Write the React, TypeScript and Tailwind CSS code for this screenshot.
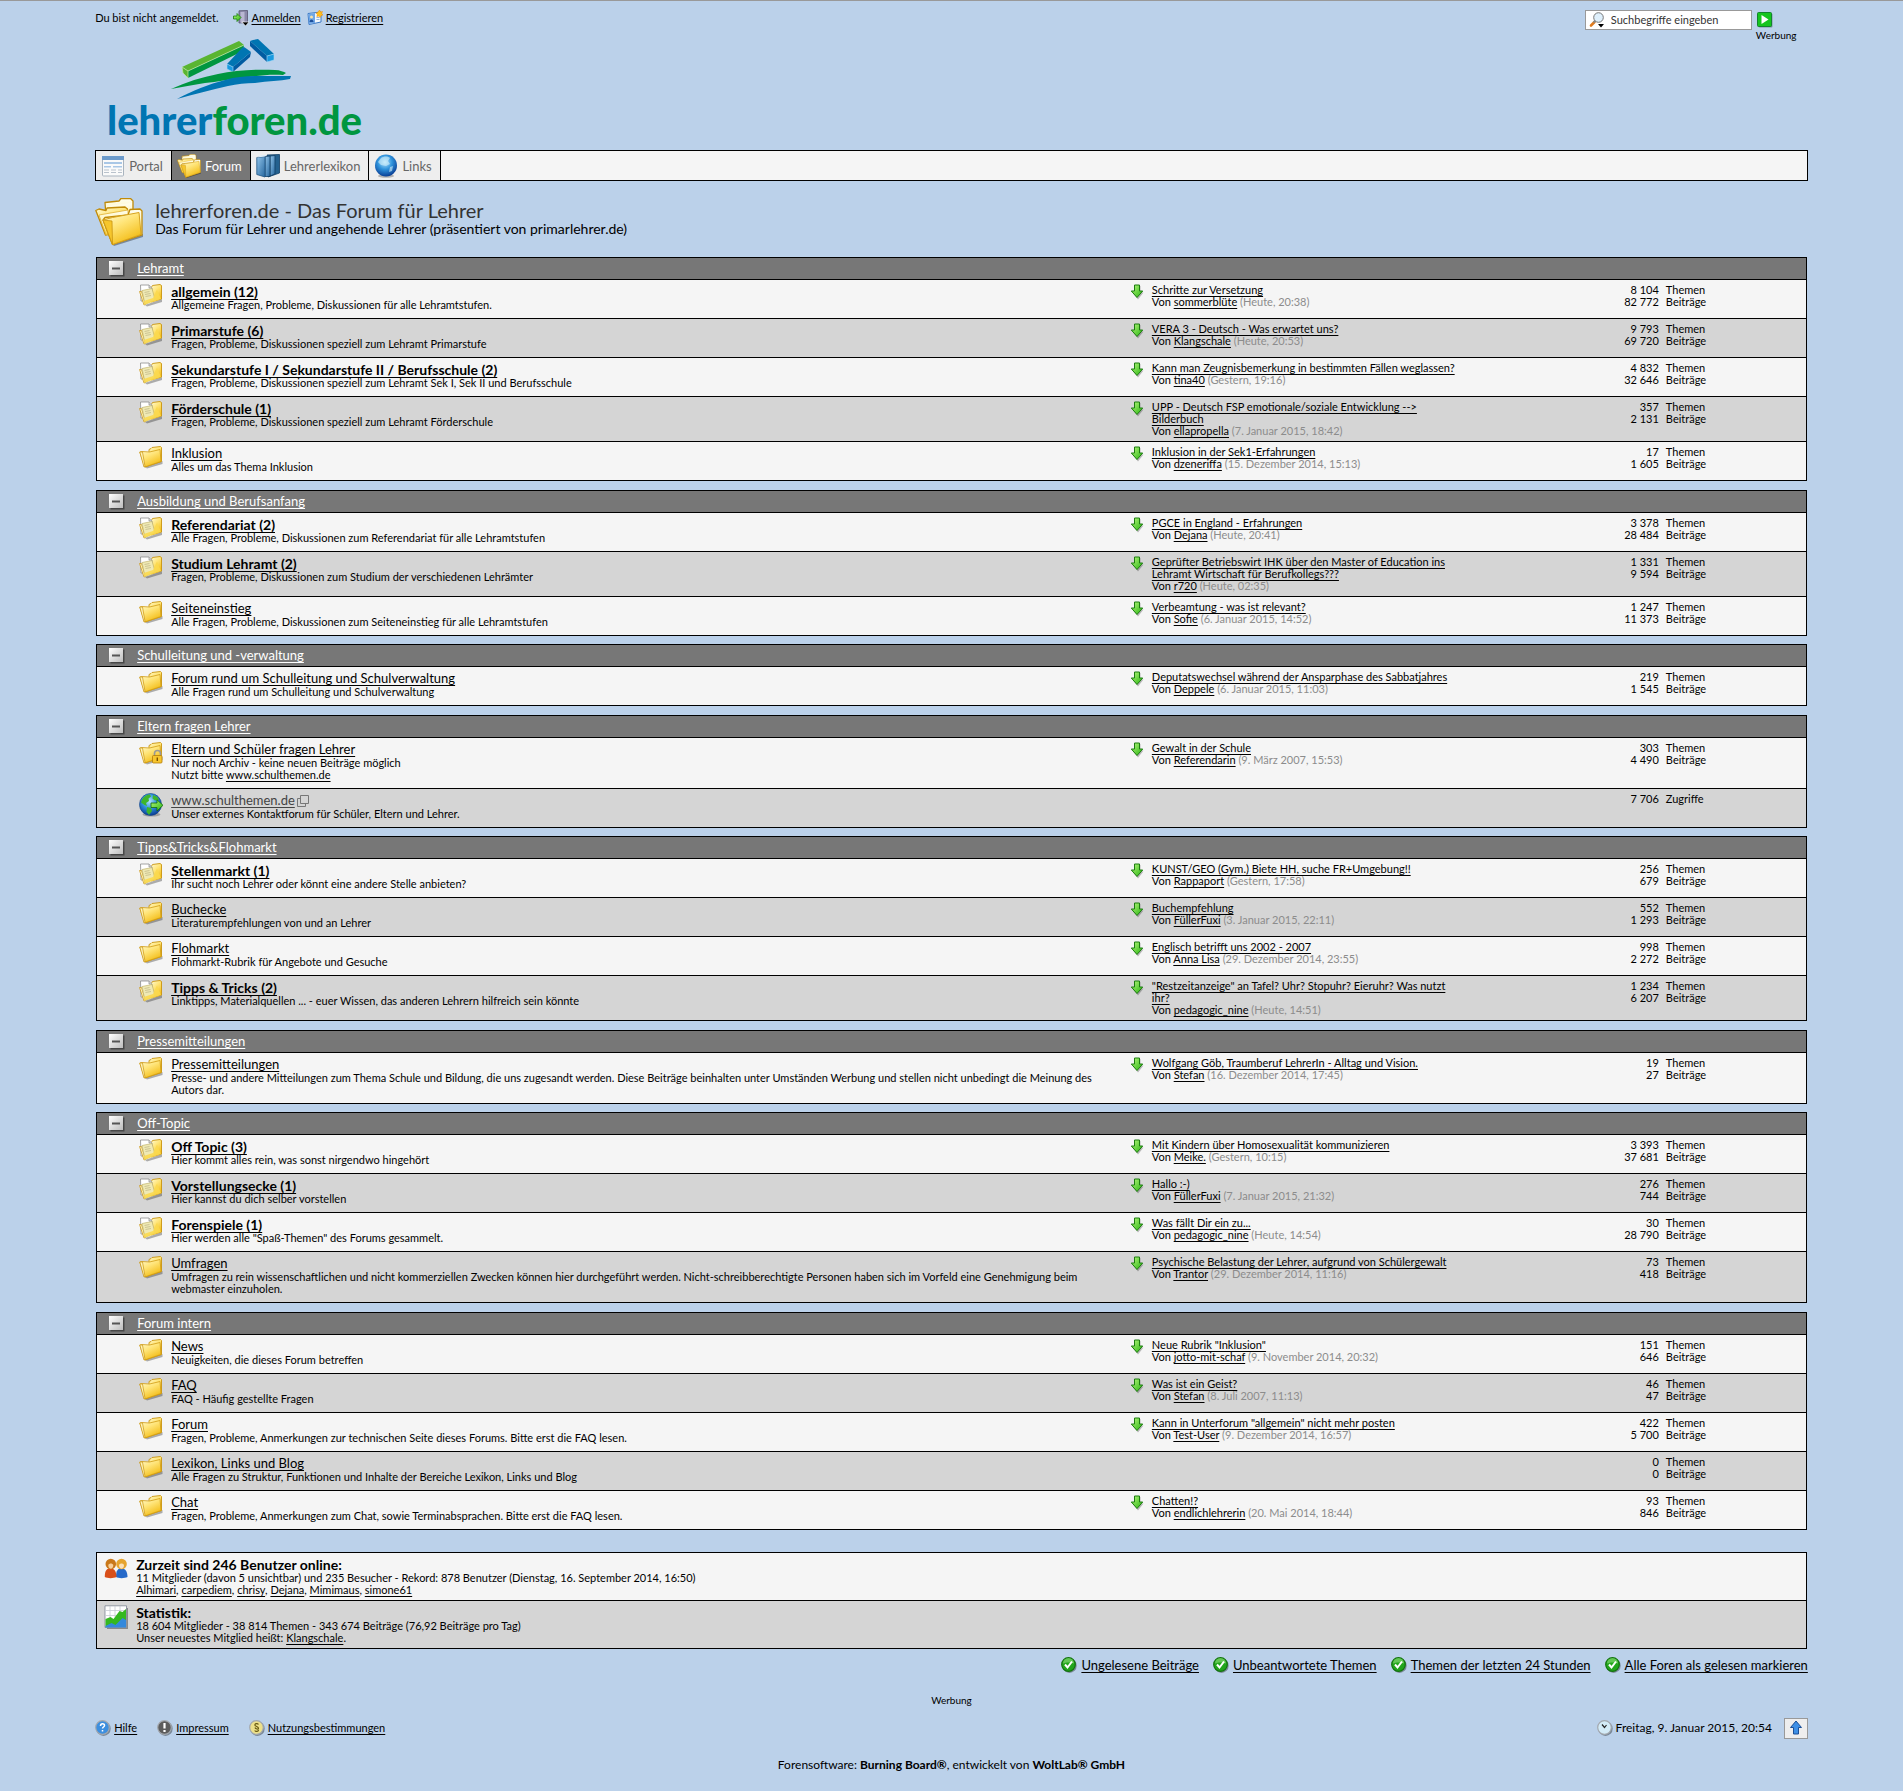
import type { ReactNode } from "react"

type Icon = "unread" | "read" | "locked" | "link"

interface Board {
  icon: Icon
  title: string
  text: ReactNode
  post?: [string, string, string]
  topics?: string
  posts?: string
  clicks?: string
}

const link =
  "underline underline-offset-2 [text-decoration-skip-ink:none] hover:text-[#444]"

const categories: { name: string; boards: Board[] }[] = [
  {
    name: "Lehramt",
    boards: [
      { icon: "unread", title: "allgemein (12)", text: "Allgemeine Fragen, Probleme, Diskussionen für alle Lehramtstufen.", post: ["Schritte zur Versetzung", "sommerblüte", "Heute, 20:38"], topics: "8 104", posts: "82 772" },
      { icon: "unread", title: "Primarstufe (6)", text: "Fragen, Probleme, Diskussionen speziell zum Lehramt Primarstufe", post: ["VERA 3 - Deutsch - Was erwartet uns?", "Klangschale", "Heute, 20:53"], topics: "9 793", posts: "69 720" },
      { icon: "unread", title: "Sekundarstufe I / Sekundarstufe II / Berufsschule (2)", text: "Fragen, Probleme, Diskussionen speziell zum Lehramt Sek I, Sek II und Berufsschule", post: ["Kann man Zeugnisbemerkung in bestimmten Fällen weglassen?", "tina40", "Gestern, 19:16"], topics: "4 832", posts: "32 646" },
      { icon: "unread", title: "Förderschule (1)", text: "Fragen, Probleme, Diskussionen speziell zum Lehramt Förderschule", post: ["UPP - Deutsch FSP emotionale/soziale Entwicklung --> Bilderbuch", "ellapropella", "7. Januar 2015, 18:42"], topics: "357", posts: "2 131" },
      { icon: "read", title: "Inklusion", text: "Alles um das Thema Inklusion", post: ["Inklusion in der Sek1-Erfahrungen", "dzeneriffa", "15. Dezember 2014, 15:13"], topics: "17", posts: "1 605" },
    ],
  },
  {
    name: "Ausbildung und Berufsanfang",
    boards: [
      { icon: "unread", title: "Referendariat (2)", text: "Alle Fragen, Probleme, Diskussionen zum Referendariat für alle Lehramtstufen", post: ["PGCE in England - Erfahrungen", "Dejana", "Heute, 20:41"], topics: "3 378", posts: "28 484" },
      { icon: "unread", title: "Studium Lehramt (2)", text: "Fragen, Probleme, Diskussionen zum Studium der verschiedenen Lehrämter", post: ["Geprüfter Betriebswirt IHK über den Master of Education ins Lehramt Wirtschaft für Berufkollegs???", "r720", "Heute, 02:35"], topics: "1 331", posts: "9 594" },
      { icon: "read", title: "Seiteneinstieg", text: "Alle Fragen, Probleme, Diskussionen zum Seiteneinstieg für alle Lehramtstufen", post: ["Verbeamtung - was ist relevant?", "Sofie", "6. Januar 2015, 14:52"], topics: "1 247", posts: "11 373" },
    ],
  },
  {
    name: "Schulleitung und -verwaltung",
    boards: [
      { icon: "read", title: "Forum rund um Schulleitung und Schulverwaltung", text: "Alle Fragen rund um Schulleitung und Schulverwaltung", post: ["Deputatswechsel während der Ansparphase des Sabbatjahres", "Deppele", "6. Januar 2015, 11:03"], topics: "219", posts: "1 545" },
    ],
  },
  {
    name: "Eltern fragen Lehrer",
    boards: [
      {
        icon: "locked",
        title: "Eltern und Schüler fragen Lehrer",
        text: (
          <>
            Nur noch Archiv - keine neuen Beiträge möglich
            <br />
            Nutzt bitte <a href="#schulthemen" className={link}>www.schulthemen.de</a>
          </>
        ),
        post: ["Gewalt in der Schule", "Referendarin", "9. März 2007, 15:53"],
        topics: "303",
        posts: "4 490",
      },
      { icon: "link", title: "www.schulthemen.de", text: "Unser externes Kontaktforum für Schüler, Eltern und Lehrer.", clicks: "7 706" },
    ],
  },
  {
    name: "Tipps&Tricks&Flohmarkt",
    boards: [
      { icon: "unread", title: "Stellenmarkt (1)", text: "Ihr sucht noch Lehrer oder könnt eine andere Stelle anbieten?", post: ["KUNST/GEO (Gym.) Biete HH, suche FR+Umgebung!!", "Rappaport", "Gestern, 17:58"], topics: "256", posts: "679" },
      { icon: "read", title: "Buchecke", text: "Literaturempfehlungen von und an Lehrer", post: ["Buchempfehlung", "FüllerFuxi", "3. Januar 2015, 22:11"], topics: "552", posts: "1 293" },
      { icon: "read", title: "Flohmarkt", text: "Flohmarkt-Rubrik für Angebote und Gesuche", post: ["Englisch betrifft uns 2002 - 2007", "Anna Lisa", "29. Dezember 2014, 23:55"], topics: "998", posts: "2 272" },
      { icon: "unread", title: "Tipps & Tricks (2)", text: "Linktipps, Materialquellen ... - euer Wissen, das anderen Lehrern hilfreich sein könnte", post: ["\"Restzeitanzeige\" an Tafel? Uhr? Stopuhr? Eieruhr? Was nutzt ihr?", "pedagogic_nine", "Heute, 14:51"], topics: "1 234", posts: "6 207" },
    ],
  },
  {
    name: "Pressemitteilungen",
    boards: [
      { icon: "read", title: "Pressemitteilungen", text: "Presse- und andere Mitteilungen zum Thema Schule und Bildung, die uns zugesandt werden. Diese Beiträge beinhalten unter Umständen Werbung und stellen nicht unbedingt die Meinung des Autors dar.", post: ["Wolfgang Göb, Traumberuf LehrerIn - Alltag und Vision.", "Stefan", "16. Dezember 2014, 17:45"], topics: "19", posts: "27" },
    ],
  },
  {
    name: "Off-Topic",
    boards: [
      { icon: "unread", title: "Off Topic (3)", text: "Hier kommt alles rein, was sonst nirgendwo hingehört", post: ["Mit Kindern über Homosexualität kommunizieren", "Meike.", "Gestern, 10:15"], topics: "3 393", posts: "37 681" },
      { icon: "unread", title: "Vorstellungsecke (1)", text: "Hier kannst du dich selber vorstellen", post: ["Hallo :-)", "FüllerFuxi", "7. Januar 2015, 21:32"], topics: "276", posts: "744" },
      { icon: "unread", title: "Forenspiele (1)", text: "Hier werden alle \"Spaß-Themen\" des Forums gesammelt.", post: ["Was fällt Dir ein zu...", "pedagogic_nine", "Heute, 14:54"], topics: "30", posts: "28 790" },
      { icon: "read", title: "Umfragen", text: "Umfragen zu rein wissenschaftlichen und nicht kommerziellen Zwecken können hier durchgeführt werden. Nicht-schreibberechtigte Personen haben sich im Vorfeld eine Genehmigung beim webmaster einzuholen.", post: ["Psychische Belastung der Lehrer, aufgrund von Schülergewalt", "Trantor", "29. Dezember 2014, 11:16"], topics: "73", posts: "418" },
    ],
  },
  {
    name: "Forum intern",
    boards: [
      { icon: "read", title: "News", text: "Neuigkeiten, die dieses Forum betreffen", post: ["Neue Rubrik \"Inklusion\"", "jotto-mit-schaf", "9. November 2014, 20:32"], topics: "151", posts: "646" },
      { icon: "read", title: "FAQ", text: "FAQ - Häufig gestellte Fragen", post: ["Was ist ein Geist?", "Stefan", "8. Juli 2007, 11:13"], topics: "46", posts: "47" },
      { icon: "read", title: "Forum", text: "Fragen, Probleme, Anmerkungen zur technischen Seite dieses Forums. Bitte erst die FAQ lesen.", post: ["Kann in Unterforum \"allgemein\" nicht mehr posten", "Test-User", "9. Dezember 2014, 16:57"], topics: "422", posts: "5 700" },
      { icon: "read", title: "Lexikon, Links und Blog", text: "Alle Fragen zu Struktur, Funktionen und Inhalte der Bereiche Lexikon, Links und Blog", topics: "0", posts: "0" },
      { icon: "read", title: "Chat", text: "Fragen, Probleme, Anmerkungen zum Chat, sowie Terminabsprachen. Bitte erst die FAQ lesen.", post: ["Chatten!?", "endlichlehrerin", "20. Mai 2014, 18:44"], topics: "93", posts: "846" },
    ],
  },
]

const members = ["Alhimari", "carpediem", "chrisy", "Dejana", "Mimimaus", "simone61"]

const quickLinks = [
  "Ungelesene Beiträge",
  "Unbeantwortete Themen",
  "Themen der letzten 24 Stunden",
  "Alle Foren als gelesen markieren",
]

/* gradients shared by all icons */
function Gradients() {
  return (
    <svg width="0" height="0" className="absolute" aria-hidden="true">
      <defs>
        <linearGradient id="yellow" x1="0" y1="0" x2="0.6" y2="1">
          <stop offset="0" stopColor="#fffbd6" />
          <stop offset="0.45" stopColor="#ffe57a" />
          <stop offset="1" stopColor="#f3bc14" />
        </linearGradient>
        <linearGradient id="cream" x1="0" y1="0" x2="0" y2="1">
          <stop offset="0" stopColor="#fffef0" />
          <stop offset="0.6" stopColor="#fdf0a4" />
          <stop offset="1" stopColor="#f7cf3c" />
        </linearGradient>
        <linearGradient id="green" x1="0" y1="0" x2="1" y2="1">
          <stop offset="0" stopColor="#b5f77c" />
          <stop offset="1" stopColor="#27b50f" />
        </linearGradient>
        <radialGradient id="globe" cx="0.45" cy="0.35" r="0.65">
          <stop offset="0" stopColor="#b4e4fb" />
          <stop offset="0.5" stopColor="#2f93dc" />
          <stop offset="1" stopColor="#0a3e94" />
        </radialGradient>
        <linearGradient id="blue" x1="0" y1="0" x2="1" y2="1">
          <stop offset="0" stopColor="#93c5ea" />
          <stop offset="1" stopColor="#26679f" />
        </linearGradient>
        <linearGradient id="grey" x1="0" y1="0" x2="1" y2="1">
          <stop offset="0" stopColor="#fff" />
          <stop offset="1" stopColor="#bdbdbd" />
        </linearGradient>
      </defs>
    </svg>
  )
}

function FolderShape() {
  return (
    <>
      <path d="M6 21 23.500 15v3L8 22.500z" fill="#000" opacity=".3" />
      <path d="M10 5.500V3.500L12 2.500 13 1.500 21.500.5 22.500 1.500V15.500L6 21z" fill="url(#yellow)" stroke="#c9940f" strokeWidth=".9" strokeLinejoin="round" />
      <path d="M.8 6 3 5.500l7.500.5L21 3.500 22 15.500 5.500 21z" fill="url(#yellow)" stroke="#d19c14" strokeWidth=".8" strokeLinejoin="round" />
      <path d="M.8 6 3.500 6 6 20.500l-1 .5z" fill="#fff3b8" stroke="#c9940f" strokeWidth=".7" strokeLinejoin="round" />
    </>
  )
}

function BoardIcon({ icon }: { icon: Icon }) {
  return (
    <svg viewBox="0 0 24 24" className="size-6 shrink-0" aria-hidden="true">
      {icon === "read" && <FolderShape />}
      {icon === "locked" && (
        <>
          <FolderShape />
          <path d="M15.500 14v-2.500a3 3 0 0 1 6 0V14" fill="none" stroke="#999" strokeWidth="1.600" />
          <rect x="13.500" y="13.500" width="9.500" height="7.500" rx="1" fill="#f7c52d" stroke="#b37b07" strokeWidth=".8" />
          <rect x="17.600" y="15.500" width="1.400" height="3.500" fill="#7a5200" />
        </>
      )}
      {icon === "unread" && (
        <>
          <path d="M6 21 23 15v3L8 22.500z" fill="#000" opacity=".3" />
          <path d="M12 4 13.500 1.500 21 .5l1.500 1V15L12 18z" fill="url(#yellow)" stroke="#c9940f" strokeWidth=".9" />
          <path d="M1.500 1h8.500l3 3v13H2z" fill="#fff" stroke="#8d8d8d" strokeWidth=".8" />
          <path d="M10 1v3h3" fill="#ddd" stroke="#8d8d8d" strokeWidth=".7" />
          <path d="M.5 7.500 2.500 7.500 6.500 20.500l-1.500.5z" fill="#fff3b8" stroke="#c9940f" strokeWidth=".7" />
          <path d="M3 6.500 13 4.500l3 11L6 20.500z" fill="#efe9b4" stroke="#b7a95c" strokeWidth=".6" />
          <path d="M4.800 17 14 14 18 5.500 22 15 5.500 20.800z" fill="#fbd94f" opacity=".9" />
          <path d="m5.500 8.500 5-1M6 10.500l5.500-1M6.500 12.500l5.500-1" stroke="#c2ba8a" strokeWidth=".8" />
        </>
      )}
      {icon === "link" && (
        <>
          <ellipse cx="12.500" cy="21.500" rx="9" ry="2" fill="#000" opacity=".25" />
          <circle cx="11.500" cy="11.500" r="11" fill="url(#globe)" stroke="#0d3f86" strokeWidth=".6" />
          <path d="M3 6.500C5 3 8 1.500 11 1.500l1 2-2.500 2 .5 2.500-3 2 1 3-2.500-1L2 9.500zM14 2l4.500 2 1.500 3-4 .5-2.500-2zM8 14l4 1 1 3-3 4-2.500-3z" fill="#3eb52b" />
          <path d="M12 10h6V6.800l6 5.500-6 5.700V14.500h-6z" fill="url(#green)" stroke="#136b08" strokeWidth=".8" />
        </>
      )}
    </svg>
  )
}

/* stacked folders, used in the tab bar and next to the heading */
function FoldersIcon({ className }: { className: string }) {
  return (
    <svg viewBox="0 0 48 48" className={className} aria-hidden="true">
      <path d="m17 46 31-10v3l-29 9z" fill="#000" opacity=".35" />
      <path d="M10 4.500 24 3l2-2.500h9.500L38 3v27l-26 3z" fill="url(#cream)" stroke="#c08a08" strokeWidth="1.300" strokeLinejoin="round" />
      <path d="m11 8 26-3v25H13z" fill="url(#cream)" />
      <path d="M.8 12.500 4 11l7 1.500L12 10l18-1 2.500 2V32l-22 5z" fill="url(#yellow)" stroke="#c08a08" strokeWidth="1.300" strokeLinejoin="round" />
      <path d="m4 17 29-5v20l-22 5z" fill="url(#cream)" stroke="#e0b030" strokeWidth=".8" />
      <path d="m8 22 2-2.500L33 17l2-5.500 10-.5 2 2v24l-29.500 9.500z" fill="url(#cream)" stroke="#c08a08" strokeWidth="1.300" strokeLinejoin="round" />
      <path d="m8 22 9.500-2.500L44 14.500l2 22L17.500 46.500z" fill="url(#yellow)" stroke="#d7a31d" strokeLinejoin="round" />
      <path d="m8 22 9 1 .5 23.500z" fill="#f6c62c" stroke="#c9940f" strokeWidth=".8" strokeLinejoin="round" />
    </svg>
  )
}

function PortalIcon() {
  return (
    <svg viewBox="0 0 24 24" className="size-6" aria-hidden="true">
      <rect x="1.500" y="2.500" width="21" height="19.500" rx="1" fill="#fafafa" stroke="#a9b4bf" />
      <path d="M1 2h22v4H1z" fill="#6d9bcb" />
      <path d="M3 8h18v2H3zM3 12h7v1.500H3zM12 12h9v1.500h-9z" fill="#a9c7e6" />
      <path d="M3 16h5M10 16h5M17 16h4M3 18.500h5M10 18.500h5M17 18.500h4" stroke="#b9c2cc" />
    </svg>
  )
}

function BooksIcon() {
  return (
    <svg viewBox="0 0 24 24" className="size-6" aria-hidden="true">
      <path d="M11 1 23.500.5V19L12 23z" fill="#24618f" stroke="#123f66" strokeWidth=".8" />
      <path d="m14 2 5-.5V20l-5 2z" fill="url(#blue)" stroke="#123f66" strokeWidth=".8" />
      <path d="m9 2.500 5-.5v20.500H9z" fill="url(#blue)" stroke="#123f66" strokeWidth=".8" />
      <path d="M.8 3.500 9 2.500v20.500L.8 20.500z" fill="url(#blue)" stroke="#1c5280" strokeWidth=".8" />
      <path d="m.8 3.500 5-2.500H11L9 2.500z" fill="#dcecf8" />
    </svg>
  )
}

function GlobeIcon() {
  return (
    <svg viewBox="0 0 24 24" className="size-6" aria-hidden="true">
      <ellipse cx="12" cy="22" rx="8" ry="1.800" fill="#000" opacity=".25" />
      <circle cx="12" cy="11.500" r="11" fill="url(#globe)" />
      <path d="M7 4c3-2 7-2 9 0l-2 3 2 3-4 2-5-1-3-3zM16 13l3-1-1 5-3 1z" fill="#d6f2fb" opacity=".6" />
    </svg>
  )
}

function LoginIcon() {
  return (
    <svg viewBox="0 0 16 16" className="size-4" aria-hidden="true">
      <path d="M6 .8 14.500.5v12L6 13z" fill="#8a88a8" stroke="#55536e" strokeWidth=".8" />
      <path d="m7.500 2 4-.3v12.800l-4-2z" fill="#b9b7d2" />
      <path d="M.5 6H4V3.500L8 7.500l-4 4V9H.5z" fill="url(#green)" stroke="#1a7d0c" strokeWidth=".8" />
      <path d="M9 12h7l-3.500 4z" fill="#000" stroke="#fff" strokeWidth=".6" />
    </svg>
  )
}

function RegisterIcon() {
  return (
    <svg viewBox="0 0 16 16" className="size-4" aria-hidden="true">
      <path d="M1 3.500 14 2v10L2 14.500z" fill="#f4f8fd" stroke="#3a78c4" />
      <path d="M1.500 4 8 3v10l-6 1z" fill="#6fa6e6" />
      <circle cx="4.500" cy="7" r="1.500" fill="#fbe3a6" />
      <path d="M2.500 12c0-3.500 4-3.500 4 0z" fill="#1d4f9b" />
      <path d="M9.500 7.500h3M9.500 9.500h3" stroke="#98b5d8" />
      <path d="m12.500 0 1 2 2-.5-.8 2 1.300 1.500-2 .5-.8 2-1.400-1.500-2 .5.500-2L9 3l2-.8z" fill="#ffbf1f" stroke="#f08a00" strokeWidth=".5" />
    </svg>
  )
}

function SearchIcon() {
  return (
    <svg viewBox="0 0 16 16" className="size-4 shrink-0" aria-hidden="true">
      <path d="m2 13.500 3.500-3.500" stroke="#e07b1e" strokeWidth="2.600" strokeLinecap="round" />
      <path d="m4.500 10.500 2-2" stroke="#888" strokeWidth="2" />
      <circle cx="9.500" cy="5.500" r="4.800" fill="#dff0fc" stroke="#777" />
      <path d="M9 12h6l-3 3.500z" fill="#000" />
    </svg>
  )
}

function GoIcon() {
  return (
    <svg viewBox="0 0 16 16" className="size-4" aria-hidden="true">
      <rect x="1.500" y="1.500" width="14" height="14" rx="1" fill="#000" opacity=".3" />
      <rect x=".5" y=".5" width="14" height="14" rx="1" fill="#16c51f" stroke="#12852e" />
      <path d="m4.500 3 7 4.500-7 4.500z" fill="#fff" />
    </svg>
  )
}

function MinusIcon() {
  return (
    <svg viewBox="0 0 16 16" className="size-4" aria-hidden="true">
      <rect x="1.500" y="1.500" width="14" height="14" fill="#000" opacity=".4" />
      <rect x="0" y="0" width="14" height="14" fill="url(#grey)" />
      <path d="M3 7.500h8" stroke="#555" strokeWidth="2" />
    </svg>
  )
}

function ArrowDownIcon() {
  return (
    <svg viewBox="0 0 16 16" className="size-4 shrink-0" aria-hidden="true">
      <path d="M6.500 2h5v6.500h3L9 15.500 3.500 8.500h3z" fill="#000" opacity=".25" />
      <path d="M5.500 1h5v6h3.200L8 13.500 2.300 7h3.200z" fill="url(#green)" stroke="#1c7c10" />
    </svg>
  )
}

function BadgeIcon({ kind }: { kind: "check" | "help" | "info" | "rules" | "clock" }) {
  const fill = { check: "#22a51c", help: "#3d8fdf", info: "#5c5c5c", rules: "#ece08a", clock: "#d3ebf7" }[kind]
  return (
    <svg viewBox="0 0 16 16" className="size-4 shrink-0" aria-hidden="true">
      <circle cx="8.500" cy="8.700" r="7.200" fill="#000" opacity=".35" />
      <circle cx="7.500" cy="7.500" r="6.800" fill={fill} stroke={kind === "check" ? "#11750c" : "#a3a8ae"} strokeWidth="1.200" />
      {kind === "check" && (
        <>
          <path d="M2 6.500a5.500 5.500 0 0 1 11 0c-3-1.500-8-1.500-11 0z" fill="#8ee07a" opacity=".6" />
          <path d="m4 7.500 2.500 3L11 4.500" fill="none" stroke="#fff" strokeWidth="2" />
        </>
      )}
      {kind === "help" && <path d="M5.500 6c0-3 4-3 4-.5 0 1.500-2 1.500-2 3M7.500 10v1.500" fill="none" stroke="#fff" strokeWidth="1.500" />}
      {kind === "info" && <path d="M7.500 3v5.500M7.500 10v2" stroke="#fff" strokeWidth="2.200" />}
      {kind === "rules" && <path d="M9.500 4.500c-1-1.500-4-1-3.500.8.500 1.200 3.500 1.500 3.500 3S6.500 9 6 7.500M5.700 10.500c1 1.500 4 1 3.800-.8" fill="none" stroke="#6a5c12" strokeWidth="1.200" />}
      {kind === "clock" && <path d="M5 4.500 7.500 7.500 9.500 5" fill="none" stroke="#222" strokeWidth="1.200" />}
    </svg>
  )
}

function MembersIcon() {
  return (
    <svg viewBox="0 0 24 24" className="size-6 shrink-0" aria-hidden="true">
      <path d="M12 20c0-7 2-8.500 5.500-8.500S23.500 14 23.500 20c-3 1.500-9 1.500-11.500 0z" fill="#2569c9" />
      <circle cx="17.500" cy="7" r="5.300" fill="#e6a42e" />
      <path d="M15 8c1-2 4-2 5 0 0 5-5 5-5 0z" fill="#fbe0b8" />
      <path d="M.8 20c0-7 2-8.500 5.700-8.500s6 2.500 6 8.500c-3 1.500-9 1.500-11.700 0z" fill="#d9501a" />
      <circle cx="6.800" cy="7" r="5.300" fill="#c9781a" />
      <path d="M4.300 8c1-2 4-2 5 0 0 5-5 5-5 0z" fill="#f8cf9b" />
    </svg>
  )
}

function StatsIcon() {
  return (
    <svg viewBox="0 0 24 24" className="size-6 shrink-0" aria-hidden="true">
      <path d="M3 3h21v21H3z" fill="#000" opacity=".35" />
      <path d="M1 .8h21.500v21.700H1z" fill="#fff" stroke="#7d8794" strokeWidth=".8" />
      <path d="M6 1v13M11 1v11M16 1v8M1 5.500h21M1 10.500h21" stroke="#c5cad2" strokeWidth=".8" />
      <path d="m1.500 14 5-2 3 2 6-8 3 1 3.500-3v14l-20.500 4z" fill="#35b81f" />
      <path d="m1.500 21 6-3 4 2 7-7 3.500 2v7.500H1.500z" fill="#3489dc" />
    </svg>
  )
}

function Logo() {
  return (
    <svg width="262" height="123" viewBox="0 0 262 123" role="img" aria-label="lehrerforen.de">
      <path d="m81 44 56-26-1 6-55 27z" fill="#009640" />
      <path d="m75 40 57-26 5 4-56 26z" fill="#5ab531" />
      <path d="m75 40 6 4v7l-5-5z" fill="#5ab531" stroke="#c5e6a8" strokeWidth=".7" />
      <path d="m81 44 56-26" stroke="#c5e6a8" strokeWidth=".7" />
      <path d="m126 40 18-15-1 5-17 15z" fill="#005ba1" />
      <path d="m120 37 15-16 2-1 3 2 4 3-18 15z" fill="#0075b2" />
      <path d="m120 37 6 3v5l-6-3z" fill="#189ae0" stroke="#a7d8f3" strokeWidth=".6" />
      <path d="m143 14 17 15v6l-17-16z" fill="#005ba1" />
      <path d="m143 14 3-1 5-1 16 15-7 2z" fill="#0075b2" />
      <path d="m160 29 7-2v6l-7 2z" fill="#189ae0" stroke="#a7d8f3" strokeWidth=".6" />
      <path d="M64 62c15-7 31-12 47-15 18-4 40-5 57-4 5 0 9 2 11 3l-3 2c-14-1-28 1-41 3-12 1-25 4-37 5-12 2-23 4-34 6z" fill="#009640" />
      <path d="M70 72c15-8 32-15 48-19 10-3 20-4 30-4l36 0-1 3c-10 2-22 2-35 4-9 0-18 1-27 3-17 4-34 8-51 13z" fill="#0075b2" />
      <text x="0" y="108" fontFamily="Lato, sans-serif" fontWeight="900" fontSize="40" fill="#0075b2">
        lehrer<tspan fill="#009640">foren.de</tspan>
      </text>
    </svg>
  )
}

function Header() {
  return (
    <header className="flex items-start justify-between">
      <div>
        <div className="flex items-center pt-2 text-[11px] leading-[18px]">
          <span className="mr-[14px]">Du bist nicht angemeldet.</span>
          <a href="#anmelden" className="mr-1.5 flex items-center gap-[3px]">
            <LoginIcon />
            <span className={link}>Anmelden</span>
          </a>
          <a href="#registrieren" className="flex items-center gap-[3px]">
            <RegisterIcon />
            <span className={link}>Registrieren</span>
          </a>
        </div>
        <a href="#start" className="ml-3 block w-[262px]">
          <Logo />
        </a>
      </div>
      <form className="flex items-start gap-1 pt-[9px]" role="search">
        <label className="flex h-5 w-[167px] items-center gap-1.5 border border-[#999] bg-white px-[3px]">
          <SearchIcon />
          <input
            type="text"
            aria-label="Suche"
            defaultValue="Suchbegriffe eingeben"
            className="w-full bg-transparent text-[11px] text-[#333] outline-none"
          />
        </label>
        <div className="w-[52px] pt-0.5">
          <button type="button" aria-label="Suchen" className="block pl-px">
            <GoIcon />
          </button>
          <span className="block text-[10px] leading-[14px]">Werbung</span>
        </div>
      </form>
    </header>
  )
}

function Tabs() {
  const tab = "flex h-[29px] items-center gap-1 border-r border-black pr-2 pl-[5px] text-[13px] leading-4"
  return (
    <nav className="flex border border-black bg-[#f5f5f5] text-[#666]">
      <a href="#portal" className={`${tab} bg-[#eee]`}><PortalIcon />Portal</a>
      <a href="#forum" className={`${tab} bg-[#777] text-white`}><FoldersIcon className="size-6" />Forum</a>
      <a href="#lexikon" className={`${tab} bg-[#eee]`}><BooksIcon />Lehrerlexikon</a>
      <a href="#links" className={`${tab} bg-[#eee]`}><GlobeIcon />Links</a>
    </nav>
  )
}

const titleStyles: Record<Icon, string> = {
  unread: "text-[14px] font-bold",
  read: "text-[13px]",
  locked: "text-[13px]",
  link: "text-[13px] text-[#444]",
}

function BoardRow({ board }: { board: Board }) {
  return (
    <li className="flex border-t border-black bg-[#f5f5f5] even:bg-[#d5d5d5]">
      <div className="flex flex-1 gap-2 pt-1 pb-[7px] pl-[42px]">
        <BoardIcon icon={board.icon} />
        <div className="flex-1">
          <h3 className={`flex h-[15px] items-center gap-0.5 ${titleStyles[board.icon]}`}>
            <a href="#board" className={link}>{board.title}</a>
            {board.icon === "link" && (
              <svg viewBox="0 0 12 12" className="size-3" aria-hidden="true">
                <path d="M3.500.500h8v8h-8zM3.500 3.500h-3v8h8v-3" fill="none" stroke="#777" />
              </svg>
            )}
          </h3>
          <p className="text-[11px] leading-3">{board.text}</p>
        </div>
      </div>
      <div className="flex w-[350px] gap-[7px] pt-1 pb-1 pl-[13px] text-[11px] leading-3">
        {board.post && (
          <>
            <ArrowDownIcon />
            <div className="w-[310px]">
              <a href="#beitrag" className={link}>{board.post[0]}</a>
              <p>
                Von <a href="#benutzer" className={link}>{board.post[1]}</a>{" "}
                <span className="text-[#8c8c8c]">({board.post[2]})</span>
              </p>
            </div>
          </>
        )}
      </div>
      <dl className="grid w-[340px] grid-cols-[193px_1fr] content-start gap-x-[7px] pt-1 text-[11px] leading-3">
        {board.clicks ? (
          <>
            <dd className="text-right">{board.clicks}</dd>
            <dt>Zugriffe</dt>
          </>
        ) : (
          <>
            <dd className="text-right">{board.topics}</dd>
            <dt>Themen</dt>
            <dd className="text-right">{board.posts}</dd>
            <dt>Beiträge</dt>
          </>
        )}
      </dl>
    </li>
  )
}

function Footer() {
  const item = "flex items-center gap-[3px]"
  return (
    <footer className="text-[11px]">
      <div className="flex h-5 items-center justify-between">
        <div className="flex gap-5">
          <a href="#hilfe" className={item}><BadgeIcon kind="help" /><span className={link}>Hilfe</span></a>
          <a href="#impressum" className={item}><BadgeIcon kind="info" /><span className={link}>Impressum</span></a>
          <a href="#nutzung" className={item}><BadgeIcon kind="rules" /><span className={link}>Nutzungsbestimmungen</span></a>
        </div>
        <div className="flex items-center gap-3 text-xs">
          <span className={item}><BadgeIcon kind="clock" />Freitag, 9. Januar 2015, 20:54</span>
          <a href="#top" aria-label="Zum Seitenanfang" className="flex h-[21px] w-6 items-center justify-center border border-[#999] bg-[#eee]">
            <svg viewBox="0 0 16 16" className="size-4" aria-hidden="true">
              <path d="m8 1 5.500 6.500h-3V14h-5V7.500h-3z" fill="#3d8fe6" stroke="#1b4f97" />
            </svg>
          </a>
        </div>
      </div>
      <p className="mt-[19px] text-center text-xs">
        Forensoftware: <b>Burning Board®</b>, entwickelt von <b>WoltLab® GmbH</b>
      </p>
    </footer>
  )
}

export default function App() {
  return (
    <div className="border-t border-[#999] bg-[#bbd1ea] pb-[18px] font-[Lato,sans-serif] text-black">
      <Gradients />
      <div className="mx-[5%]">
        <Header />
        <Tabs />
        <div className="mt-[17px] flex gap-3">
          <FoldersIcon className="size-12" />
          <div>
            <h1 className="text-[20px] leading-6 text-[#333]">lehrerforen.de - Das Forum für Lehrer</h1>
            <p className="text-[14px] leading-[14px]">Das Forum für Lehrer und angehende Lehrer (präsentiert von primarlehrer.de)</p>
          </div>
        </div>

        <main className="mx-px mt-[11px]">
          {categories.map((category) => (
            <section key={category.name} className="mb-[9px] border border-black even:mb-2">
              <h2 className="flex h-[21px] items-center gap-3 bg-[#777] pl-3 text-[13px] text-white">
                <button type="button" aria-label={`${category.name} zuklappen`}><MinusIcon /></button>
                <a href="#kategorie" className="underline underline-offset-2 [text-decoration-skip-ink:none]">{category.name}</a>
              </h2>
              <ul>
                {category.boards.map((board) => (
                  <BoardRow key={board.title} board={board} />
                ))}
              </ul>
            </section>
          ))}

          <section className="mt-[22px] border border-black text-[11px] leading-3">
            <div className="flex gap-2 bg-[#f5f5f5] px-[7px] pt-1 pb-1">
              <MembersIcon />
              <div>
                <h3 className="text-[14px] leading-[15px] font-bold">Zurzeit sind 246 Benutzer online:</h3>
                <p>11 Mitglieder (davon 5 unsichtbar) und 235 Besucher - Rekord: 878 Benutzer (Dienstag, 16. September 2014, 16:50)</p>
                <p>
                  {members.map((name, i) => (
                    <span key={name}>
                      {i > 0 && ", "}
                      <a href="#benutzer" className={link}>{name}</a>
                    </span>
                  ))}
                </p>
              </div>
            </div>
            <div className="flex gap-2 border-t border-black bg-[#d5d5d5] px-[7px] pt-1 pb-1">
              <StatsIcon />
              <div>
                <h3 className="text-[14px] leading-[15px] font-bold">Statistik:</h3>
                <p>18 604 Mitglieder - 38 814 Themen - 343 674 Beiträge (76,92 Beiträge pro Tag)</p>
                <p>Unser neuestes Mitglied heißt: <a href="#benutzer" className={link}>Klangschale</a>.</p>
              </div>
            </div>
          </section>
        </main>

        <ul className="mt-2 flex justify-end gap-[14px] text-[13px] leading-4">
          {quickLinks.map((label) => (
            <li key={label}>
              <a href="#themen" className="flex items-center gap-1">
                <BadgeIcon kind="check" />
                <span className={link}>{label}</span>
              </a>
            </li>
          ))}
        </ul>
        <p className="mt-[19px] mb-[10px] text-center text-[10px] leading-4">Werbung</p>
        <Footer />
      </div>
    </div>
  )
}
